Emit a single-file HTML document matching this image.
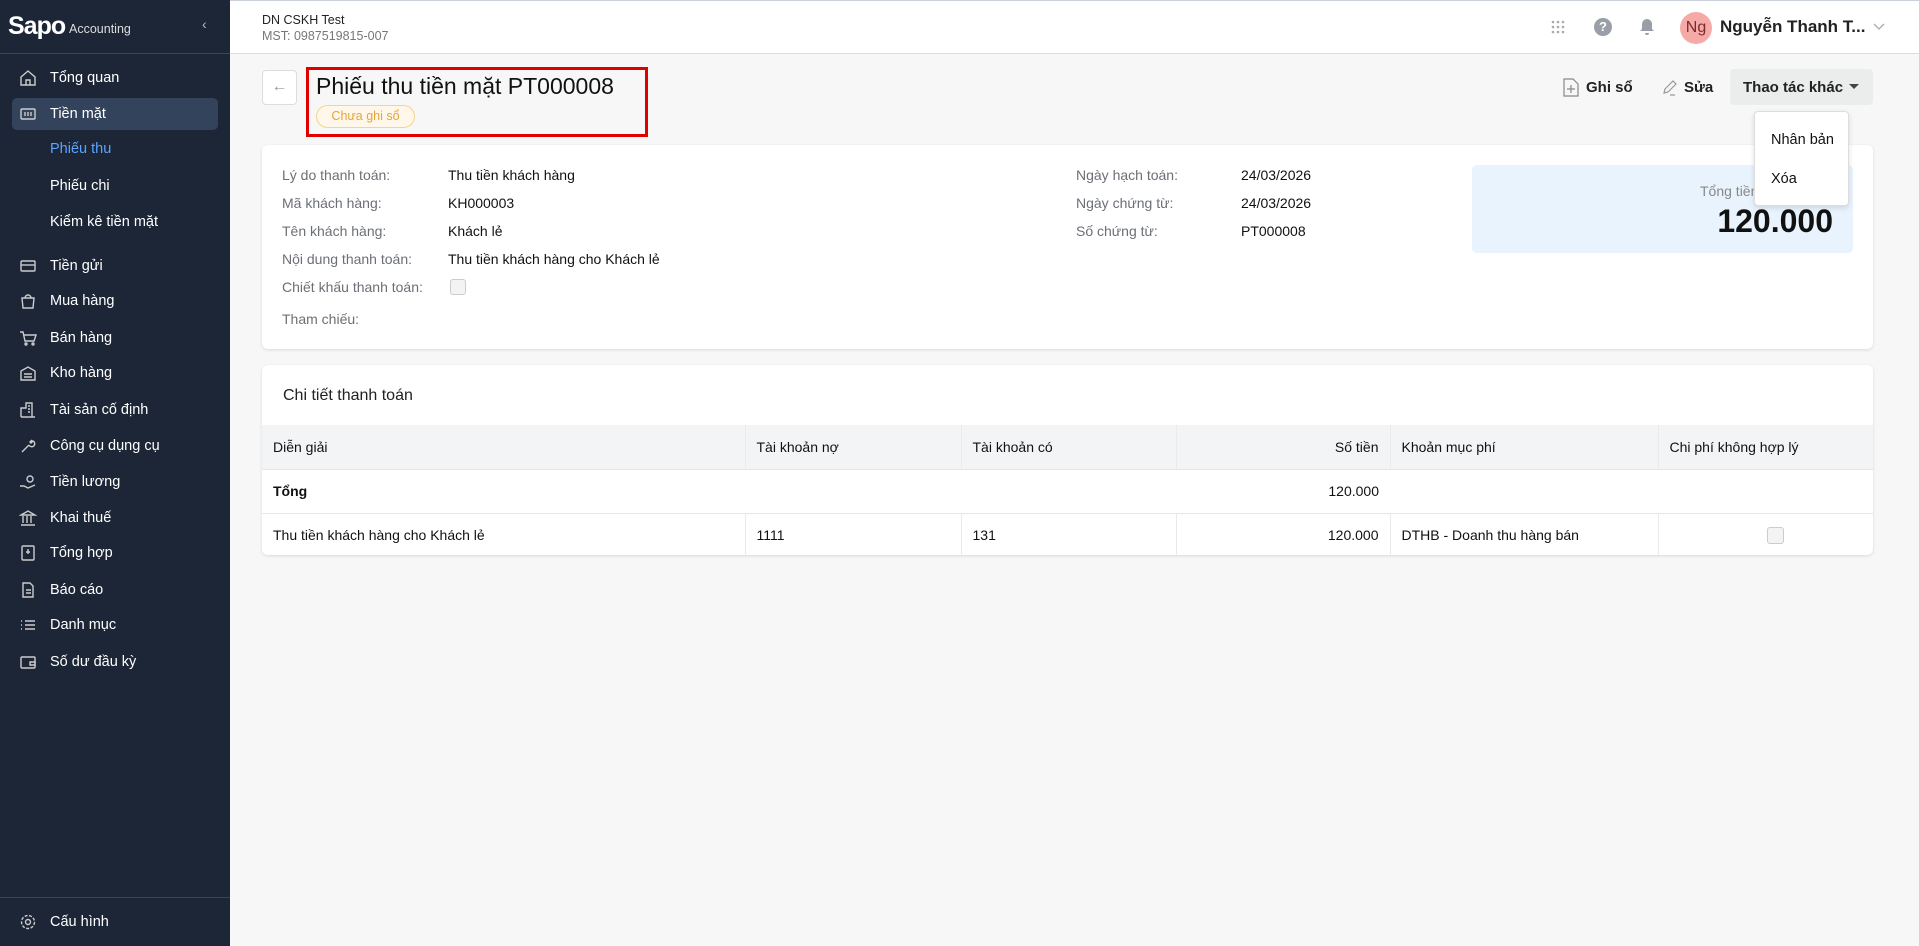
<!DOCTYPE html>
<html><head><meta charset="utf-8"><style>
*{box-sizing:border-box;margin:0;padding:0}
body{width:1919px;height:946px;overflow:hidden;font-family:"Liberation Sans",sans-serif;background:#f7f7f7;color:#111;font-size:14px;position:relative}
.sb{position:absolute;left:0;top:0;width:230px;height:946px;background:#1c2637;color:#fff}
.sb .logo{height:54px;border-bottom:1px solid #3a4556;position:relative}
.sb .it{position:absolute;left:0;width:230px;height:34px;display:flex;align-items:center;font-size:14.5px}
.sb .it svg{position:absolute;left:19px}
.sb .it span{position:absolute;left:50px}
.abs{position:absolute}
.hdr{position:absolute;left:230px;top:0;right:0;height:54px;background:#fff;border-bottom:1px solid #ddd;border-top:1px solid #c9d0da}
.card{position:absolute;background:#fff;border-radius:6px;box-shadow:0 1px 3px rgba(0,0,0,.12)}
.lb{position:absolute;color:#6b6f76;font-size:14px}
.vl{position:absolute;color:#111;font-size:14px}
table{border-collapse:collapse;position:absolute;left:0;top:60px;width:1611px;font-size:14px}
td,th{height:44px;padding:0 11px;text-align:left;font-weight:normal;border-right:1px solid #eaeaea;border-bottom:1px solid #e6e6e6}
th{background:#f3f4f6;height:44px}
</style></head><body>
<div class="sb">
 <div class="logo">
  <div class="abs" style="left:8px;top:12px;font-size:25px;font-weight:bold;letter-spacing:-1px">Sapo</div>
  <div class="abs" style="left:69px;top:22px;font-size:12.5px;color:#ddd">Accounting</div>
  <div class="abs" style="left:202px;top:16px;font-size:14px;color:#bbb">‹</div>
 </div>
 <div class="it" style="top:61px"><svg width="18" height="18" viewBox="0 0 18 18" fill="none" stroke="#ccc" stroke-width="1.4"><path d="M2 8L9 2l7 6v8H2z M7 16v-5h4v5"/></svg><span>Tổng quan</span></div>
 <div class="abs" style="left:12px;top:98px;width:206px;height:32px;background:#33435c;border-radius:5px"></div>
 <div class="it" style="top:97px"><svg width="18" height="18" viewBox="0 0 18 18" fill="none" stroke="#ccc" stroke-width="1.4"><rect x="2" y="4" width="14" height="10" rx="1"/><path d="M6 7v4M9 7v4M12 7v4"/></svg><span>Tiền mặt</span></div>
 <div class="it" style="top:132px;color:#5ba4ff"><span>Phiếu thu</span></div>
 <div class="it" style="top:169px"><span>Phiếu chi</span></div>
 <div class="it" style="top:205px"><span>Kiểm kê tiền mặt</span></div>
 <div class="it" style="top:249px"><svg width="18" height="18" viewBox="0 0 18 18" fill="none" stroke="#ccc" stroke-width="1.4"><rect x="2" y="4" width="14" height="10" rx="1"/><path d="M2 8h14"/></svg><span>Tiền gửi</span></div>
 <div class="it" style="top:284px"><svg width="18" height="18" viewBox="0 0 18 18" fill="none" stroke="#ccc" stroke-width="1.4"><path d="M3 6h12l-1 10H4z M6 6a3 3 0 016 0"/></svg><span>Mua hàng</span></div>
 <div class="it" style="top:321px"><svg width="18" height="18" viewBox="0 0 18 18" fill="none" stroke="#ccc" stroke-width="1.4"><path d="M1 3h3l2 9h9l2-6H5"/><circle cx="7" cy="15" r="1"/><circle cx="14" cy="15" r="1"/></svg><span>Bán hàng</span></div>
 <div class="it" style="top:356px"><svg width="18" height="18" viewBox="0 0 18 18" fill="none" stroke="#ccc" stroke-width="1.4"><path d="M2 7l7-4 7 4v9H2z M5 10h8M5 13h8"/></svg><span>Kho hàng</span></div>
 <div class="it" style="top:393px"><svg width="18" height="18" viewBox="0 0 18 18" fill="none" stroke="#ccc" stroke-width="1.4"><path d="M2 16V7h5V2h6v14M2 16h14M9 5h2M9 8h2M9 11h2"/></svg><span>Tài sản cố định</span></div>
 <div class="it" style="top:429px"><svg width="18" height="18" viewBox="0 0 18 18" fill="none" stroke="#ccc" stroke-width="1.4"><path d="M3 15l7-7M10 8a3 3 0 104-4l-2 2-1-1 2-2"/></svg><span>Công cụ dụng cụ</span></div>
 <div class="it" style="top:465px"><svg width="18" height="18" viewBox="0 0 18 18" fill="none" stroke="#ccc" stroke-width="1.4"><circle cx="11" cy="6" r="3"/><path d="M1 13h4l4 2 7-3"/></svg><span>Tiền lương</span></div>
 <div class="it" style="top:501px"><svg width="18" height="18" viewBox="0 0 18 18" fill="none" stroke="#ccc" stroke-width="1.4"><path d="M2 6l7-4 7 4z M4 7v7M8 7v7M12 7v7M2 16h14"/></svg><span>Khai thuế</span></div>
 <div class="it" style="top:536px"><svg width="18" height="18" viewBox="0 0 18 18" fill="none" stroke="#ccc" stroke-width="1.4"><rect x="3" y="2" width="12" height="14" rx="1"/><path d="M9 5v5M7 8h4"/></svg><span>Tổng hợp</span></div>
 <div class="it" style="top:573px"><svg width="18" height="18" viewBox="0 0 18 18" fill="none" stroke="#ccc" stroke-width="1.4"><path d="M4 2h7l3 3v11H4z M7 9h5M7 12h5"/></svg><span>Báo cáo</span></div>
 <div class="it" style="top:608px"><svg width="18" height="18" viewBox="0 0 18 18" fill="none" stroke="#ccc" stroke-width="1.4"><path d="M6 5h10M6 9h10M6 13h10M2 5h1M2 9h1M2 13h1"/></svg><span>Danh mục</span></div>
 <div class="it" style="top:645px"><svg width="18" height="18" viewBox="0 0 18 18" fill="none" stroke="#ccc" stroke-width="1.4"><rect x="2" y="4" width="14" height="11" rx="1"/><path d="M11 9h5v3h-5z"/></svg><span>Số dư đầu kỳ</span></div>
 <div class="abs" style="left:0;top:897px;width:230px;border-top:1px solid #3a4556"></div>
 <div class="it" style="top:905px"><svg width="18" height="18" viewBox="0 0 18 18" fill="none" stroke="#ccc" stroke-width="1.4"><circle cx="9" cy="9" r="2.5"/><circle cx="9" cy="9" r="6.5" stroke-dasharray="3 1.5"/></svg><span>Cấu hình</span></div>
</div>
<div class="hdr">
 <div class="abs" style="left:32px;top:12px;font-size:12.5px;color:#222">DN CSKH Test</div>
 <div class="abs" style="left:32px;top:28px;font-size:12.5px;color:#777">MST: 0987519815-007</div>
 <svg class="abs" style="left:1321px;top:19px" width="14" height="14" viewBox="0 0 14 14" fill="#aaa"><circle cx="2" cy="2" r="1.3"/><circle cx="7" cy="2" r="1.3"/><circle cx="12" cy="2" r="1.3"/><circle cx="2" cy="7" r="1.3"/><circle cx="7" cy="7" r="1.3"/><circle cx="12" cy="7" r="1.3"/><circle cx="2" cy="12" r="1.3"/><circle cx="7" cy="12" r="1.3"/><circle cx="12" cy="12" r="1.3"/></svg>
 <div class="abs" style="left:1364px;top:17px;width:18px;height:18px;border-radius:50%;background:#9a9ea6;color:#fff;font-size:13px;font-weight:bold;text-align:center;line-height:18px">?</div>
 <svg class="abs" style="left:1409px;top:17px" width="16" height="18" viewBox="0 0 16 18" fill="#9a9ea6"><path d="M8 1a5 5 0 00-5 5v5l-2 2h14l-2-2V6a5 5 0 00-5-5zM6 15h4a2 2 0 01-4 0z"/></svg>
 <div class="abs" style="left:1450px;top:11px;width:32px;height:32px;border-radius:50%;background:#f6aaa8;color:#7a2a2a;font-size:16px;text-align:center;line-height:32px">Ng</div>
 <div class="abs" style="left:1490px;top:16px;font-size:17px;font-weight:bold;color:#222">Nguyễn Thanh T...</div>
 <svg class="abs" style="left:1643px;top:22px" width="12" height="8" viewBox="0 0 12 8" fill="none" stroke="#aaa" stroke-width="1.3"><path d="M1 1l5 5 5-5"/></svg>
</div>
<div class="abs" style="left:262px;top:70px;width:35px;height:35px;border:1px solid #ddd;border-radius:4px;background:#fff;color:#999;text-align:center;line-height:32px;font-size:16px">←</div>
<div class="abs" style="left:306px;top:67px;width:342px;height:70px;border:3px solid #e00000"></div>
<div class="abs" style="left:316px;top:73px;font-size:23px;color:#111">Phiếu thu tiền mặt PT000008</div>
<div class="abs" style="left:316px;top:105px;width:99px;height:23px;border:1px solid #f6d48e;background:#fff8ea;border-radius:12px;color:#e7a33a;font-size:12.5px;text-align:center;line-height:21px">Chưa ghi sổ</div>
<svg class="abs" style="left:1563px;top:78px" width="16" height="19" viewBox="0 0 16 19" fill="none" stroke="#888" stroke-width="1.2"><path d="M1 1h9l5 5v12H1z M8 7v8M4 11h8"/></svg>
<div class="abs" style="left:1586px;top:79px;font-size:15px;font-weight:bold;color:#222">Ghi sổ</div>
<svg class="abs" style="left:1662px;top:79px" width="18" height="17" viewBox="0 0 18 17" fill="none" stroke="#999" stroke-width="1.2"><path d="M2 14l1-4 8-8 3 3-8 8z M8 16h5"/></svg>
<div class="abs" style="left:1684px;top:79px;font-size:15px;font-weight:bold;color:#222">Sửa</div>
<div class="abs" style="left:1730px;top:69px;width:143px;height:36px;background:#ebecec;border-radius:4px"></div>
<div class="abs" style="left:1743px;top:79px;font-size:15px;font-weight:bold;color:#222">Thao tác khác</div>
<div class="abs" style="left:1849px;top:84px;border-left:5px solid transparent;border-right:5px solid transparent;border-top:5px solid #444"></div>

<div class="card" style="left:262px;top:145px;width:1611px;height:204px">
 <div class="lb" style="left:20px;top:22px">Lý do thanh toán:</div><div class="vl" style="left:186px;top:22px">Thu tiền khách hàng</div>
 <div class="lb" style="left:20px;top:50px">Mã khách hàng:</div><div class="vl" style="left:186px;top:50px">KH000003</div>
 <div class="lb" style="left:20px;top:78px">Tên khách hàng:</div><div class="vl" style="left:186px;top:78px">Khách lẻ</div>
 <div class="lb" style="left:20px;top:106px">Nội dung thanh toán:</div><div class="vl" style="left:186px;top:106px">Thu tiền khách hàng cho Khách lẻ</div>
 <div class="lb" style="left:20px;top:134px">Chiết khấu thanh toán:</div><div class="abs" style="left:188px;top:134px;width:16px;height:16px;border:1px solid #ccc;border-radius:3px;background:#f3f3f3"></div>
 <div class="lb" style="left:20px;top:166px">Tham chiếu:</div>
 <div class="lb" style="left:814px;top:22px">Ngày hạch toán:</div><div class="vl" style="left:979px;top:22px">24/03/2026</div>
 <div class="lb" style="left:814px;top:50px">Ngày chứng từ:</div><div class="vl" style="left:979px;top:50px">24/03/2026</div>
 <div class="lb" style="left:814px;top:78px">Số chứng từ:</div><div class="vl" style="left:979px;top:78px">PT000008</div>
 <div class="abs" style="left:1210px;top:20px;width:381px;height:88px;background:#e8f3fd;border-radius:5px">
  <div class="abs" style="left:228px;top:18px;font-size:14px;color:#888">Tổng tiền</div>
  <div class="abs" style="right:20px;top:38px;font-size:32px;font-weight:bold;color:#111">120.000</div>
 </div>
</div>
<div class="abs" style="left:1754px;top:111px;width:95px;height:95px;background:#fff;border:1px solid #ddd;border-radius:4px;box-shadow:0 2px 6px rgba(0,0,0,.12)">
 <div class="abs" style="left:16px;top:20px;font-size:14.5px">Nhân bản</div>
 <div class="abs" style="left:16px;top:59px;font-size:14.5px">Xóa</div>
</div>

<div class="card" style="left:262px;top:365px;width:1611px;height:190px;overflow:hidden">
 <div class="abs" style="left:21px;top:22px;font-size:16px;color:#222">Chi tiết thanh toán</div>
 <table>
  <tr><th style="width:483px">Diễn giải</th><th style="width:216px">Tài khoản nợ</th><th style="width:215px">Tài khoản có</th><th style="width:214px;text-align:right">Số tiền</th><th style="width:268px">Khoản mục phí</th><th style="border-right:none">Chi phí không hợp lý</th></tr>
  <tr><td style="border-right:none;font-weight:bold">Tổng</td><td style="border-right:none"></td><td style="border-right:none"></td><td style="text-align:right;border-right:none">120.000</td><td style="border-right:none"></td><td style="border-right:none"></td></tr>
  <tr><td>Thu tiền khách hàng cho Khách lẻ</td><td>1111</td><td>131</td><td style="text-align:right">120.000</td><td>DTHB - Doanh thu hàng bán</td><td style="border-right:none"><div style="margin-left:97px;width:17px;height:17px;border:1px solid #ccc;border-radius:3px;background:#f3f3f3"></div></td></tr>
 </table>
</div>
</body></html>
